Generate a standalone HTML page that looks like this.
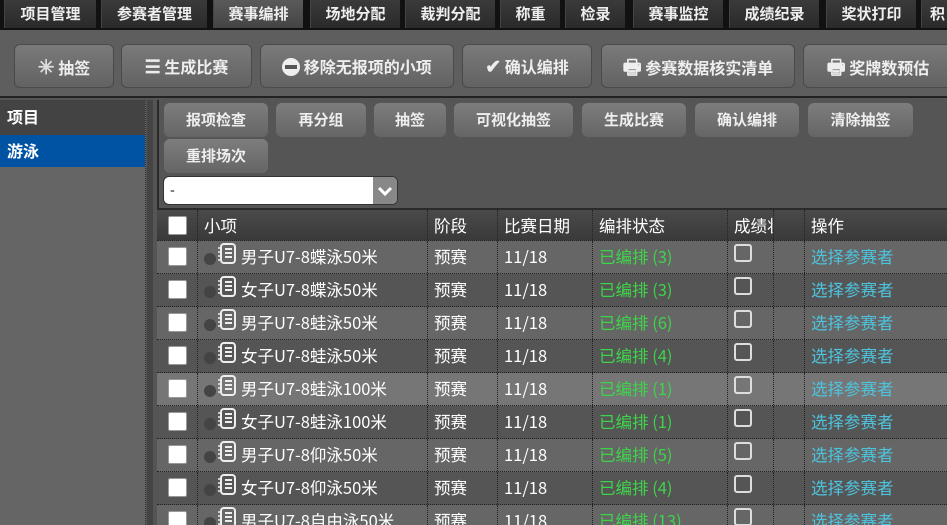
<!DOCTYPE html><html><head><meta charset="utf-8"><style>
*{box-sizing:border-box;margin:0;padding:0}
html{overflow:hidden;width:947px;height:525px}
body{width:947px;height:525px;overflow:hidden;background:#555;font-family:"Noto Sans CJK SC","Liberation Sans",sans-serif;color:#fff;position:relative}
.a{position:absolute}
.nav{left:0;top:0;width:947px;height:30px;background:#111}
.tab{position:absolute;top:0;height:28px;background:linear-gradient(#3a3a3a,#2a2a2a);border-left:1px solid #444;font-size:15px;font-weight:bold;line-height:27px;text-align:center;color:#eee}
.tab.on{background:linear-gradient(#5a5a5a,#444);}
.tb{left:0;top:30px;width:947px;height:68px;background:#5e5e5e;border-bottom:2px solid #222}
.b1{position:absolute;top:14px;height:44px;border:1px solid #4a4a4a;border-radius:6px;background:linear-gradient(#7a7a7a,#626262);font-size:16px;font-weight:bold;line-height:42px;text-align:center;color:#eee}
.b2{position:absolute;height:34px;border-radius:6px;background:linear-gradient(#7d7d7d,#656565);font-size:15px;font-weight:bold;line-height:34px;text-align:center;color:#eee}
.left{left:0;top:100px;width:146px;height:425px;background:#656565;border-right:1px dotted #333}
.row{position:absolute;left:157px;width:790px;height:33px;border-bottom:1px dotted #222;font-size:16.5px;line-height:31px}
.c{position:absolute;top:0;height:100%;border-left:1px dotted #222;padding-left:6px;white-space:nowrap;overflow:hidden}
.cb{position:absolute;left:11px;top:6px;width:19px;height:19px;background:#fff;border-radius:2px;border:1px solid #999}
.g{color:#3ed44a}.l{color:#4ec3dd}
.sq{display:inline-block;width:18px;height:18px;border:2px solid #ddd;border-radius:3px;margin-top:3px;vertical-align:top}
.dot{display:inline-block;width:12px;height:12px;border-radius:50%;background:#444;margin:0 1px 0 0;vertical-align:middle}
svg.nb{vertical-align:-2px;margin-right:4px}
</style></head><body>
<div class="a nav">
<div class="tab" style="left:4px;width:92px">项目管理</div>
<div class="tab" style="left:101px;width:106px">参赛者管理</div>
<div class="tab on" style="left:213px;width:90px">赛事编排</div>
<div class="tab" style="left:310px;width:90px">场地分配</div>
<div class="tab" style="left:405px;width:90px">裁判分配</div>
<div class="tab" style="left:500px;width:60px">称重</div>
<div class="tab" style="left:565px;width:60px">检录</div>
<div class="tab" style="left:633px;width:90px">赛事监控</div>
<div class="tab" style="left:729px;width:90px">成绩纪录</div>
<div class="tab" style="left:826px;width:90px">奖状打印</div>
<div class="tab" style="left:921px;width:40px;text-align:left;padding-left:8px">积</div>
</div>
<div class="a tb">
<div class="b1" style="left:14px;width:100px"><span style="color:#ddd;font-size:20px">✳</span> 抽签</div>
<div class="b1" style="left:121px;width:131px"><span style="font-size:18px">☰</span> 生成比赛</div>
<div class="b1" style="left:260px;width:194px"><span style="display:inline-block;width:18px;height:18px;border-radius:50%;background:#eee;vertical-align:-3px;position:relative"><span style="position:absolute;left:3px;top:7px;width:12px;height:4px;background:#555"></span></span> 移除无报项的小项</div>
<div class="b1" style="left:462px;width:130px"><span style="font-size:19px">✔</span> 确认编排</div>
<div class="b1" style="left:601px;width:194px"><span style="font-size:20px">🖶</span> 参赛数据核实清单</div>
<div class="b1" style="left:803px;width:150px"><span style="font-size:20px">🖶</span> 奖牌数预估</div>
</div>
<div class="a left">
<div style="height:35px;background:#434343;padding:4px 7px;font-size:16px;font-weight:bold">项目</div>
<div style="height:32px;background:#0052a2;padding:3px 7px;font-size:16px;font-weight:bold">游泳</div>
</div>
<div class="a" style="left:147px;top:100px;width:6px;height:425px;background:#444"></div>
<div class="a" style="left:157px;top:100px;width:2px;height:425px;background:#2a2a2a"></div>
<div class="b2" style="left:164px;top:103px;width:104px">报项检查</div>
<div class="b2" style="left:276px;top:103px;width:90px">再分组</div>
<div class="b2" style="left:374px;top:103px;width:72px">抽签</div>
<div class="b2" style="left:454px;top:103px;width:119px">可视化抽签</div>
<div class="b2" style="left:582px;top:103px;width:104px">生成比赛</div>
<div class="b2" style="left:695px;top:103px;width:104px">确认编排</div>
<div class="b2" style="left:808px;top:103px;width:105px">清除抽签</div>
<div class="b2" style="left:164px;top:139px;width:104px">重排场次</div>
<div class="a" style="left:163px;top:176px;width:235px;height:29px;background:#fff;border:1px solid #333;border-radius:6px;overflow:hidden;color:#000;font-size:14px;line-height:26px;padding-left:6px">-<div class="a" style="right:0;top:0;width:24px;height:28px;background:#888"><svg width="24" height="28"><path d="M6 11l6 6 6-6" stroke="#fff" stroke-width="3" fill="none"/></svg></div></div>
<div class="row" style="top:208px;background:linear-gradient(#4a4a4a,#3a3a3a);border-top:2px solid #2a2a2a"><div class="cb"></div>
<div class="c" style="left:40px;width:230px">小项</div><div class="c" style="left:270px;width:70px">阶段</div><div class="c" style="left:340px;width:95px">比赛日期</div><div class="c" style="left:435px;width:135px">编排状态</div><div class="c" style="left:570px;width:46px">成绩状</div><div class="c" style="left:616px;width:31px"></div><div class="c" style="left:647px;width:143px">操作</div></div>
<div id="rows"></div>
<script>
var d=[["男子U7-8蝶泳50米",3],["女子U7-8蝶泳50米",3],["男子U7-8蛙泳50米",6],["女子U7-8蛙泳50米",4],["男子U7-8蛙泳100米",1],["女子U7-8蛙泳100米",1],["男子U7-8仰泳50米",5],["女子U7-8仰泳50米",4],["男子U7-8自由泳50米",13]];
var nb='<svg class="nb" width="20" height="22" viewBox="0 0 20 22"><rect x="4" y="1" width="14" height="19" rx="3" fill="none" stroke="#eee" stroke-width="2"/><path d="M8 6h7M8 10h7M8 14h7" stroke="#eee" stroke-width="2"/><path d="M1 5h4M1 9h4M1 13h4M1 17h4" stroke="#eee" stroke-width="1.6"/></svg>';
var h="";d.forEach(function(r,i){var bg=i==4?"#767676":(i%2?"#555":"#666");
h+='<div class="row" style="top:'+(241+i*33)+'px;background:'+bg+'"><div class="cb"></div><div class="c" style="left:40px;width:230px"><span class="dot"></span>'+nb+r[0]+'</div><div class="c" style="left:270px;width:70px">预赛</div><div class="c" style="left:340px;width:95px">11/18</div><div class="c g" style="left:435px;width:135px">已编排 ('+r[1]+')</div><div class="c" style="left:570px;width:46px"><span class="sq"></span></div><div class="c" style="left:616px;width:31px"></div><div class="c l" style="left:647px;width:143px">选择参赛者</div></div>';});
document.getElementById("rows").innerHTML=h;
</script>
</body></html>
